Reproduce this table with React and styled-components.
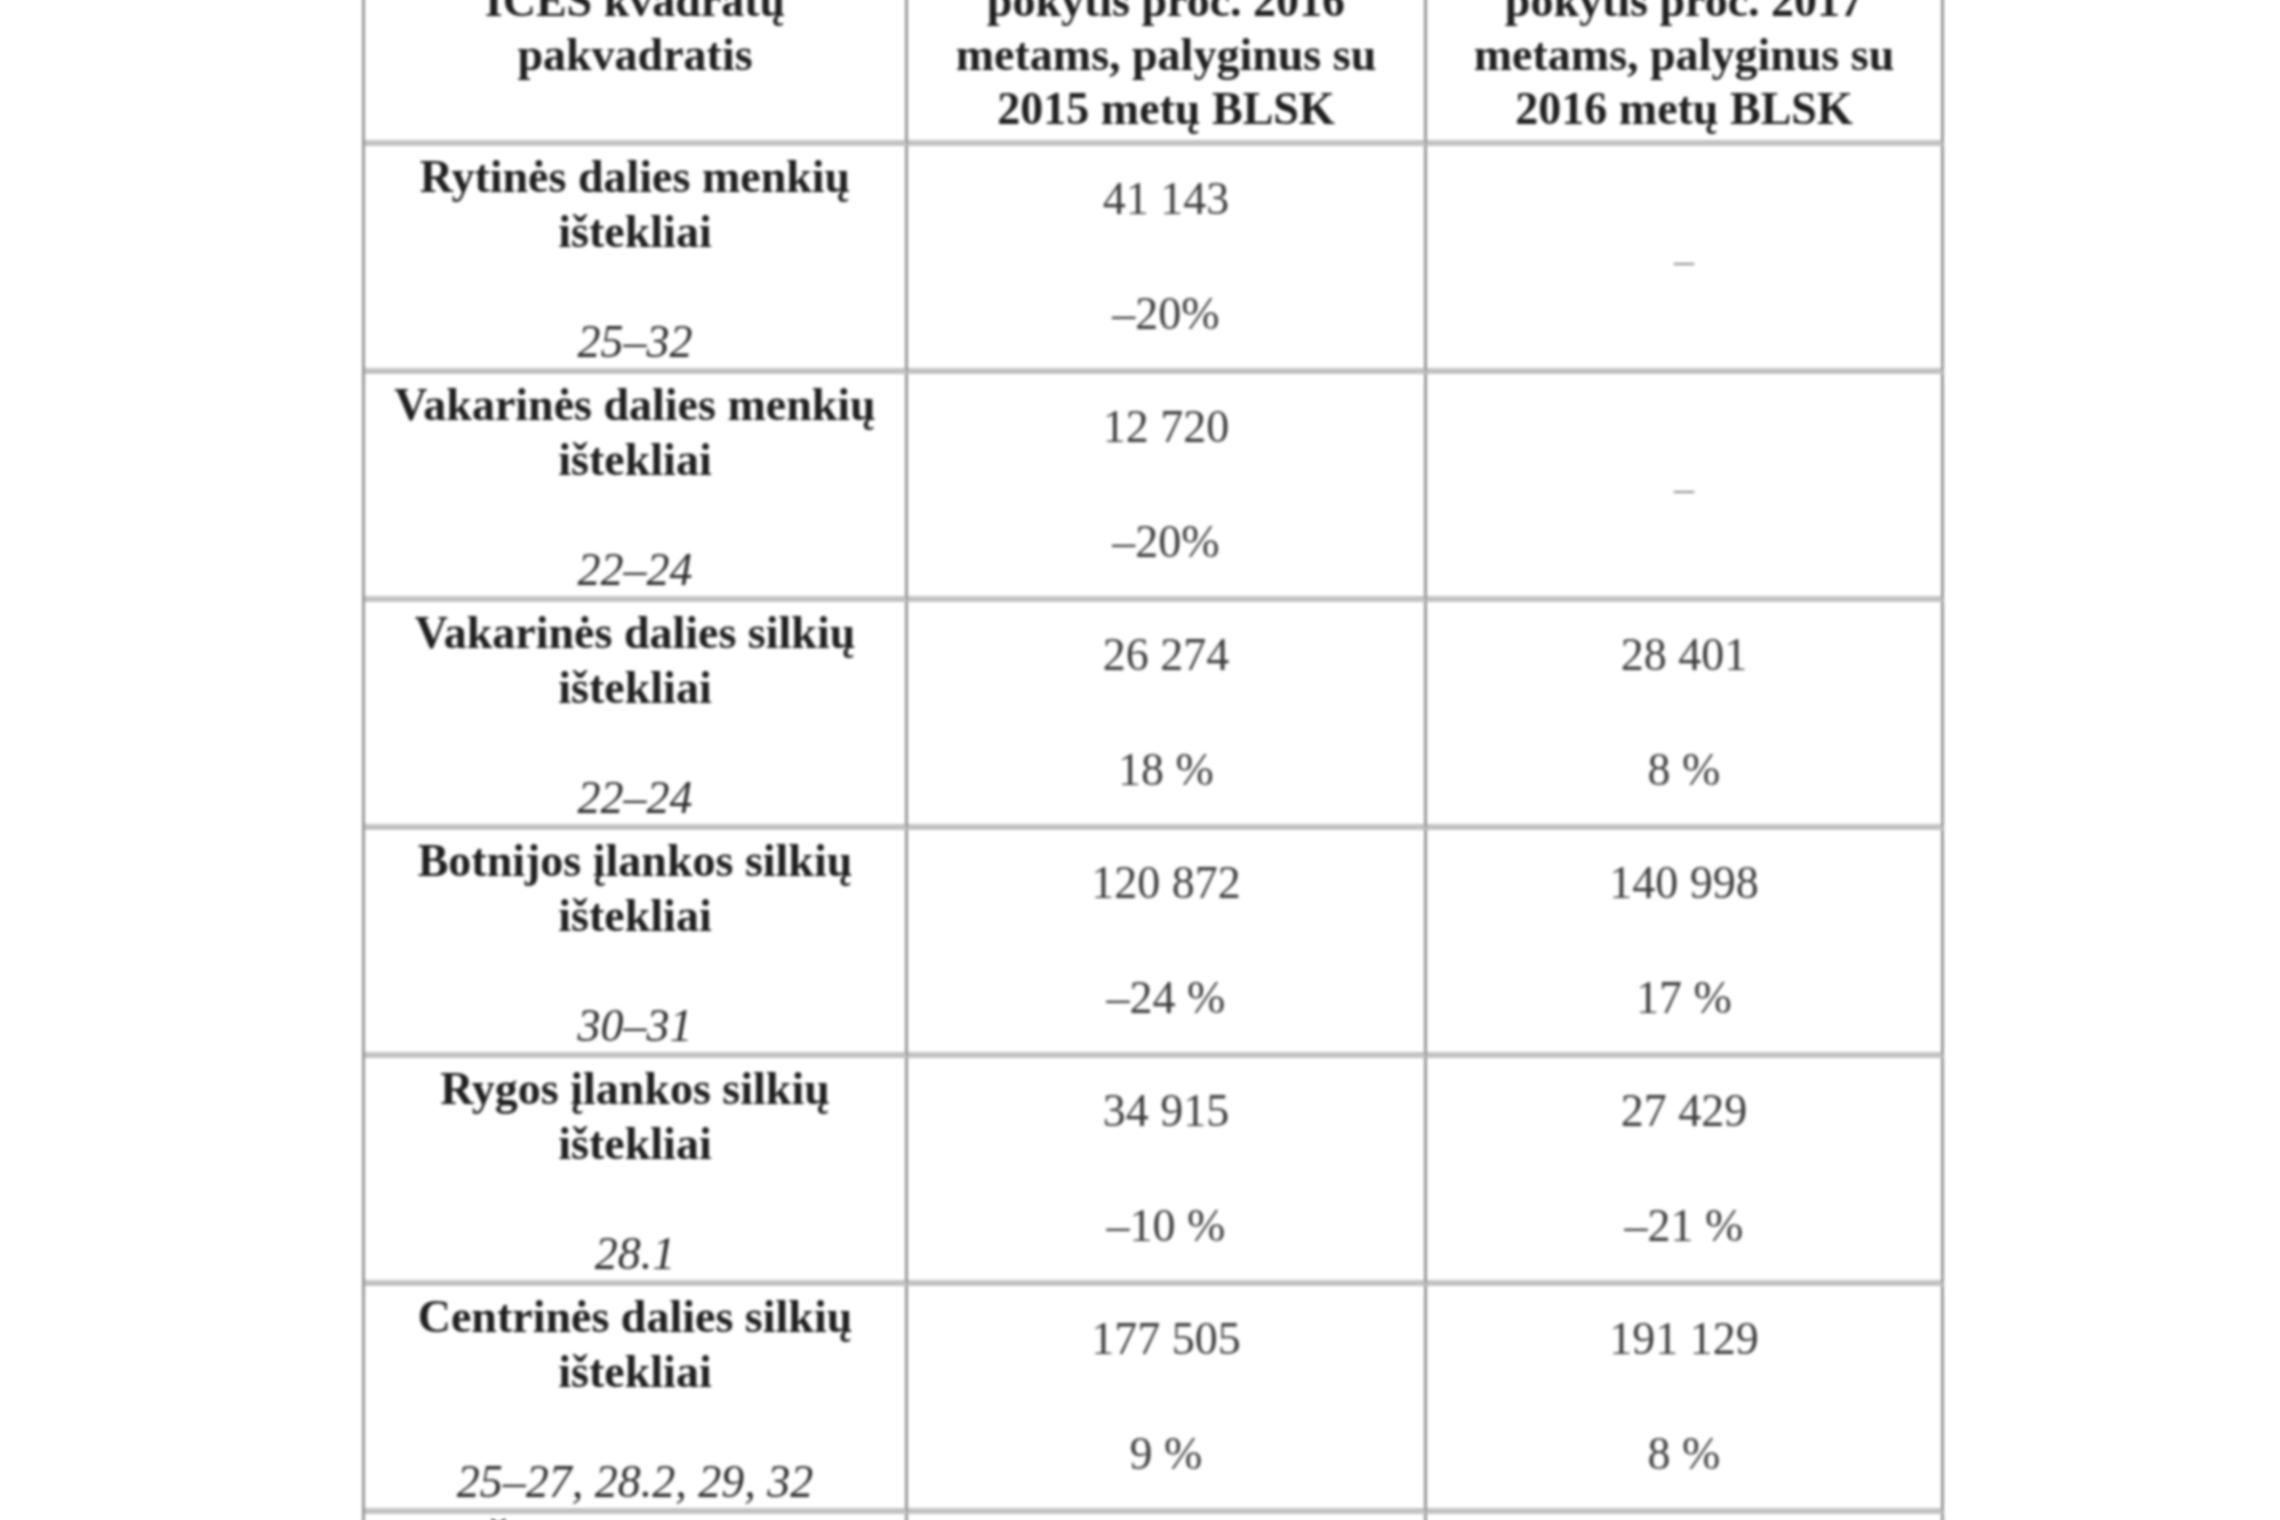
import styled, { createGlobalStyle } from "styled-components";

const GlobalStyle = createGlobalStyle`
  html, body {
    margin: 0;
    padding: 0;
    background: #fff;
  }
  body {
    font-family: "Liberation Serif", "Times New Roman", serif;
  }
`;

const Page = styled.div`
  width: 2280px;
  height: 1520px;
  overflow: hidden;
  background: #fff;
`;

const Table = styled.div`
  display: grid;
  grid-template-columns: 543px 519px 517px;
  width: max-content;
  margin: -80px 0 0 362px;
  border-left: 3px solid #969696;
  color: #1f1f1f;
  filter: blur(1.4px);
`;

const Cell = styled.div`
  box-sizing: border-box;
  border-right: 3px solid #969696;
  border-bottom: 6px solid #c2c2c2;
  text-align: center;
  font-size: 46px;
`;

const HeadCell = styled(Cell)`
  padding: 0 10px 4px;
  line-height: 54px;
  font-weight: 700;
`;

const Line = styled.span`
  display: block;
  white-space: nowrap;
`;

const NameCell = styled(Cell)`
  height: 228px;
  padding: 3px 14px 0;
  line-height: 55px;
`;

const Name = styled.div`
  font-weight: 700;
`;

const Area = styled.div`
  margin-top: 55px;
  font-style: italic;
  color: #2c2c2c;
`;

const ValueCell = styled(Cell)`
  height: 228px;
  display: flex;
  flex-direction: column;
  align-items: center;
  justify-content: center;
  gap: 59px;
  line-height: 56px;
  color: #3c3c3c;
  padding-bottom: 2px;
`;

const Dash = styled.span`
  color: #8a8a8a;
  font-size: 40px;
  margin-top: 8px;
`;

const header = [
  ["Ištekliai ir", "ICES kvadratų", "pakvadratis"],
  ["2016 m. BLSK (t) ir", "pokytis proc. 2016", "metams, palyginus su", "2015 metų BLSK"],
  ["2017 m. BLSK (t) ir", "pokytis proc. 2017", "metams, palyginus su", "2016 metų BLSK"],
];

const rows = [
  { name: "Rytinės dalies menkių ištekliai", area: "25–32", y16: ["41 143", "–20%"], y17: null },
  { name: "Vakarinės dalies menkių ištekliai", area: "22–24", y16: ["12 720", "–20%"], y17: null },
  { name: "Vakarinės dalies silkių ištekliai", area: "22–24", y16: ["26 274", "18 %"], y17: ["28 401", "8 %"] },
  { name: "Botnijos įlankos silkių ištekliai", area: "30–31", y16: ["120 872", "–24 %"], y17: ["140 998", "17 %"] },
  { name: "Rygos įlankos silkių ištekliai", area: "28.1", y16: ["34 915", "–10 %"], y17: ["27 429", "–21 %"] },
  {
    name: "Centrinės dalies silkių ištekliai",
    area: "25–27, 28.2, 29, 32",
    y16: ["177 505", "9 %"],
    y17: ["191 129", "8 %"],
  },
  { name: "Šprotų ištekliai", area: "22–32", y16: ["202 320", "–13 %"], y17: ["260 993", "29 %"] },
];

function Values({ data }) {
  if (!data) {
    return (
      <ValueCell>
        <Dash>–</Dash>
      </ValueCell>
    );
  }
  return (
    <ValueCell>
      <span>{data[0]}</span>
      <span>{data[1]}</span>
    </ValueCell>
  );
}

function Row({ row }) {
  return (
    <>
      <NameCell>
        <Name>{row.name}</Name>
        <Area>{row.area}</Area>
      </NameCell>
      <Values data={row.y16} />
      <Values data={row.y17} />
    </>
  );
}

export default function App() {
  return (
    <Page>
      <GlobalStyle />
      <Table>
        {header.map((lines, i) => (
          <HeadCell key={i}>
            {lines.map((l) => (
              <Line key={l}>{l}</Line>
            ))}
          </HeadCell>
        ))}

        {rows.map((r) => (
          <Row key={r.name} row={r} />
        ))}
      </Table>
    </Page>
  );
}
